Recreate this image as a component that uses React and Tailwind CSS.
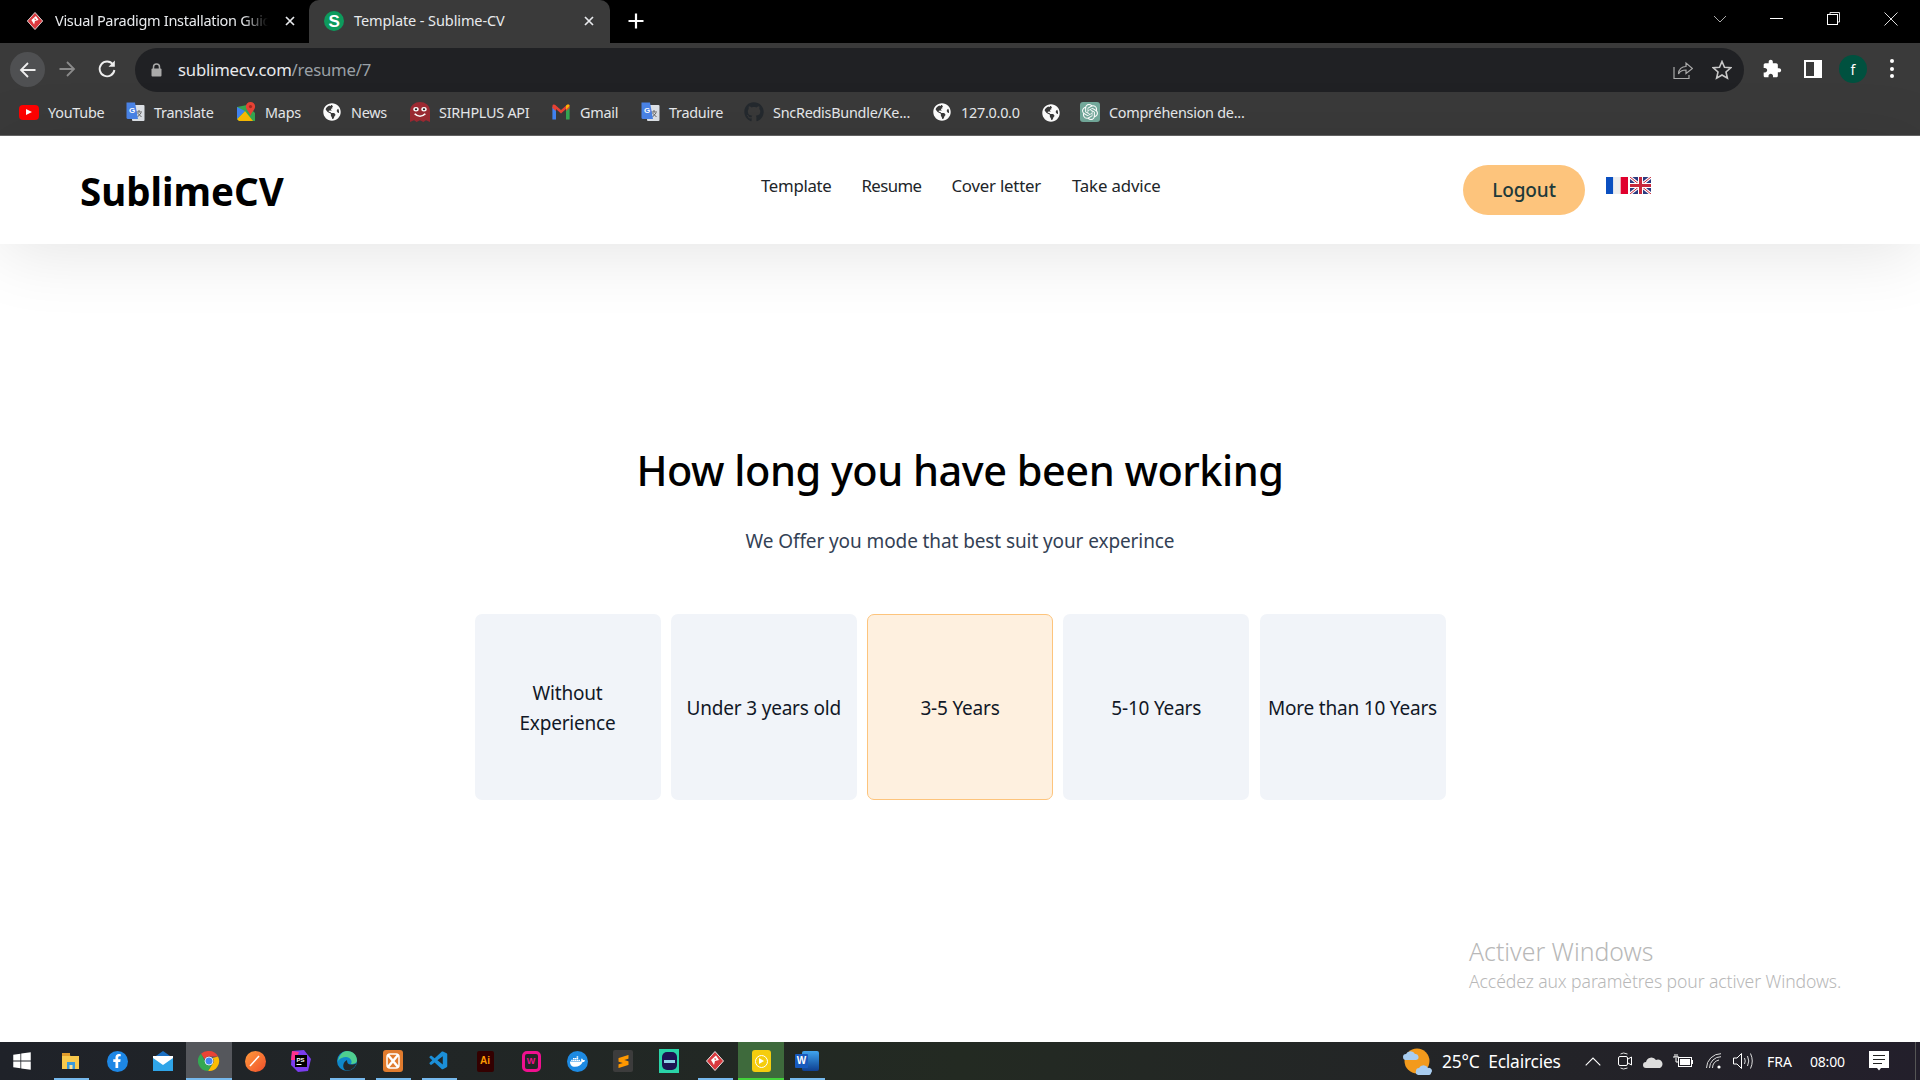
import React from "react";
import { FaGithub, FaGlobeAmericas, FaWindows, FaFacebookF, FaDocker } from "react-icons/fa";
import { SiOpenai, SiSublimetext } from "react-icons/si";
import { VscVscode } from "react-icons/vsc";

const font = "font-['Noto_Sans','Open_Sans',sans-serif]";

const VP = ({ s = 18 }) => (
  <svg width={s} height={s} viewBox="0 0 20 20">
    <path d="M10 0.5 L18.5 10 L10 19.5 L1.5 10 Z" fill="#d93a3f" stroke="#e9e9e9" strokeWidth="1" />
    <path d="M6 9 L11 4.5 L14 9 L10 10 L9 14 Z" fill="#fff" />
    <path d="M9.5 7 L11.5 8 L9.8 9.2 Z" fill="#d93a3f" />
  </svg>
);

const TabS = () => (
  <div className="w-5 h-5 rounded-full bg-[#0d9a5c] text-white flex items-center justify-center text-[17px] font-bold leading-none font-['Liberation_Sans',sans-serif]">S</div>
);

const Translate = () => (
  <svg width="20" height="20" viewBox="0 0 20 20">
    <rect x="7" y="3" width="12.5" height="16" rx="1" fill="#dfe3e8" />
    <path d="M11 10h6M14 8v2M12.5 15l3.5-4M12.5 11l4 4" stroke="#666" strokeWidth="1" fill="none" />
    <path d="M1.5 0.5H10L13 17H3a1.5 1.5 0 0 1-1.5-1.5Z" fill="#4a84e8" />
    <text x="4" y="11" fontSize="8" fontWeight="700" fill="#fff" fontFamily="Liberation Sans">G</text>
  </svg>
);

const Maps = () => (
  <svg width="20" height="20" viewBox="0 0 20 20">
    <path d="M1 5 L11 3 L19 11 V19 H3 L1 17 Z" fill="#36a852" />
    <path d="M1 17 L9 9 L17 19 H3 Z" fill="#fbbc04" />
    <path d="M1 5 L9 9 L1 17 Z" fill="#4285f4" />
    <path d="M14.5 0 a4.6 4.6 0 0 1 4.6 4.6 C19.1 8 15.5 10 14.5 14 C13.5 10 9.9 8 9.9 4.6 A4.6 4.6 0 0 1 14.5 0Z" fill="#ea4335" />
    <circle cx="14.5" cy="4.6" r="1.6" fill="#a52a20" />
  </svg>
);

const Ghost = () => (
  <svg width="20" height="20" viewBox="2.5 1 15 18" preserveAspectRatio="none">
    <path d="M2.5 19 V8.5 a7.5 7.5 0 0 1 15 0 V19 L14.5 17.5 L12.5 19 L10 17.5 L7.5 19 L5.5 17.5 Z" fill="#9d2a33" />
    <circle cx="7" cy="7.5" r="2" fill="#fff" /><circle cx="13" cy="7.5" r="2" fill="#fff" />
    <circle cx="7" cy="7.5" r="0.9" fill="#222" /><circle cx="13" cy="7.5" r="0.9" fill="#222" />
    <path d="M6 11.5 Q10 16 14 11.5" stroke="#fff" strokeWidth="1.3" fill="none" />
  </svg>
);

const Gmail = () => (
  <svg width="20" height="16" viewBox="0 0 20 16">
    <path d="M1.4 15.5 V3 L5 5.5 V15.5 Z" fill="#4285f4" />
    <path d="M15 15.5 V5.5 L18.6 3 V15.5 Z" fill="#34a853" />
    <path d="M1.4 4 V2 Q1.6 0 4 0.8 L10 6 L16 0.8 Q18.4 0 18.6 2 V4 L15 7 V5 L10 9.6 L5 5 V7 Z" fill="#ea4335" />
    <path d="M15 5.5 L18.6 2 Q18.4 0 16 0.8 L15 1.8Z" fill="#fbbc04" />
  </svg>
);

const Gpt = () => (
  <div className="w-5 h-5 rounded-[3px] bg-[#74aa9c] flex items-center justify-center"><SiOpenai className="text-[16px] text-white" /></div>
);

const bookmarks = [
  { w: "w-[106px]", icon: <div className="w-5 h-[15px] bg-[#f00] rounded-[4px] flex items-center justify-center"><div className="w-0 h-0 border-y-[3.5px] border-y-transparent border-l-[6px] border-l-white" /></div>, t: "YouTube" },
  { w: "w-[111px]", icon: <Translate />, t: "Translate" },
  { w: "w-[86px]", icon: <Maps />, t: "Maps" },
  { w: "w-[88px]", icon: <FaGlobeAmericas className="text-[18px] text-white" />, t: "News" },
  { w: "w-[141px]", icon: <Ghost />, t: "SIRHPLUS API" },
  { w: "w-[89px]", icon: <Gmail />, t: "Gmail" },
  { w: "w-[104px]", icon: <Translate />, t: "Traduire" },
  { w: "w-[188px]", icon: <FaGithub className="text-[20px] text-[#24292e]" />, t: "SncRedisBundle/Ke..." },
  { w: "w-[109px]", icon: <FaGlobeAmericas className="text-[18px] text-white" />, t: "127.0.0.0" },
  { w: "w-[39px]", icon: <FaGlobeAmericas className="text-[18px] text-white" />, t: "" },
  { w: "w-[190px]", icon: <Gpt />, t: "Compréhension de..." },
];

const TabStrip = () => (
  <div className="h-[43px] bg-black flex items-end pl-[8px] text-white text-[14.5px] tracking-[-0.1px] shrink-0">
    <div className="w-[301px] h-[43px] flex items-center pl-[18px] pr-[13px] pb-[1px] gap-[11px]">
      <VP />
      <span className="w-[213px] overflow-hidden whitespace-nowrap tracking-[-0.3px] text-[#e8eaed] [mask-image:linear-gradient(90deg,#000_88%,transparent)]">Visual Paradigm Installation Guide</span>
      <svg width="12" height="12" viewBox="0 0 12 12" className="ml-auto shrink-0"><path d="M2 2 L10 10 M10 2 L2 10" stroke="#e8eaed" strokeWidth="1.7" /></svg>
    </div>
    <div className="w-[301px] h-[43px] bg-[#3a3a3a] rounded-t-[10px] flex items-center pl-[15px] pr-[15px] pb-[1px] gap-[10px]">
      <TabS />
      <span className="whitespace-nowrap text-[#e8eaed]">Template - Sublime-CV</span>
      <svg width="12" height="12" viewBox="0 0 12 12" className="ml-auto"><path d="M2 2 L10 10 M10 2 L2 10" stroke="#e8eaed" strokeWidth="1.7" /></svg>
    </div>
    <div className="h-[43px] flex items-center ml-[18px] pb-[1px]">
      <svg width="16" height="16" viewBox="0 0 16 16"><path d="M8 0.5 V15.5 M0.5 8 H15.5" stroke="#fff" strokeWidth="2.2" /></svg>
    </div>
    <div className="ml-auto h-[43px] flex items-center self-start pb-[6px]">
      <svg width="14" height="8" viewBox="0 0 14 8" className="mr-[43px]"><path d="M1 1 L7 7 L13 1" stroke="#aaa" fill="none" /></svg>
      <div className="w-[13px] h-px bg-white mr-[44px]" />
      <svg width="13" height="13" viewBox="0 0 13 13" className="mr-[44px]"><path d="M3 2.5 V0.5 H12.5 V10 H10.5" stroke="#ddd" fill="none" /><rect x="0.5" y="2.5" width="10" height="10" stroke="#fff" fill="none" /></svg>
      <svg width="14" height="14" viewBox="0 0 14 14" className="mr-[22px]"><path d="M0.5 0.5 L13.5 13.5 M13.5 0.5 L0.5 13.5" stroke="#ddd" /></svg>
    </div>
  </div>
);

const Toolbar = () => (
  <div className="h-[53px] bg-[#3a3a3a] flex items-start pt-[5px] shrink-0">
    <div className="w-[35px] h-[35px] ml-[10px] mt-[4px] rounded-full bg-[#4f5052] flex items-center justify-center">
      <svg width="18" height="18" viewBox="0 0 18 18"><path d="M16.5 9 H2 M9 2 L2 9 L9 16" stroke="#eee" strokeWidth="1.8" fill="none" /></svg>
    </div>
    <div className="w-[18px] h-[18px] ml-[13px] mt-[12px]">
      <svg width="18" height="18" viewBox="0 0 18 18"><path d="M1.5 9 H16 M9 2 L16 9 L9 16" stroke="#8a8a8a" strokeWidth="1.8" fill="none" /></svg>
    </div>
    <div className="w-[20px] h-[20px] ml-[21px] mt-[11px]">
      <svg width="20" height="20" viewBox="0 0 20 20"><path d="M16 5.5 A7.4 7.4 0 1 0 17.4 11" stroke="#eee" strokeWidth="1.9" fill="none" /><path d="M17.8 1.5 V7.8 H11.5 Z" fill="#eee" /></svg>
    </div>
    <div className="w-[1609px] h-[44px] ml-[18px] rounded-full bg-[#202124] flex items-center pl-[16px] pr-[12px]">
      <svg width="11" height="14" viewBox="0 0 11 14"><path d="M2.5 6 V4 a3 3 0 0 1 6 0 V6" stroke="#aaa" strokeWidth="1.5" fill="none" /><rect x="0.5" y="5.5" width="10" height="8" rx="1" fill="#aaa" /></svg>
      <span className="ml-[16px] text-[16.7px] tracking-[-0.2px] text-[#e8eaed]">sublimecv.com<span className="text-[#9aa0a6]">/resume/7</span></span>
      <svg width="20" height="20" viewBox="0 0 20 20" className="ml-auto"><path d="M1 7 V18.5 H16 V15" stroke="#aaa" strokeWidth="1.2" fill="none" /><path d="M5.5 14 C5.5 9 9 6.5 13 6.5 V3 L19.5 8.5 L13 13.5 V10 C9.5 10 7 11 5.5 14 Z" stroke="#aaa" strokeWidth="1.2" fill="none" /></svg>
      <svg width="20" height="20" viewBox="0 0 20 20" className="ml-[19px]"><path d="M10 1.5 L12.5 7.3 L18.7 7.8 L14 12 L15.4 18.2 L10 15 L4.6 18.2 L6 12 L1.3 7.8 L7.5 7.3 Z" stroke="#c8c8c8" strokeWidth="1.6" fill="none" /></svg>
    </div>
    <svg width="20" height="20" viewBox="0 0 24 24" className="ml-[18px] mt-[11px] shrink-0"><path fill="#fff" d="M20.5 11H19V7c0-1.1-.9-2-2-2h-4V3.5C13 2.12 11.88 1 10.5 1S8 2.12 8 3.5V5H4c-1.1 0-1.99.9-1.99 2v3.8H3.5c1.49 0 2.7 1.21 2.7 2.7s-1.21 2.7-2.7 2.7H2V20c0 1.1.9 2 2 2h3.8v-1.5c0-1.49 1.21-2.7 2.7-2.7 1.49 0 2.7 1.21 2.7 2.7V22H17c1.1 0 2-.9 2-2v-4h1.5c1.38 0 2.5-1.12 2.5-2.5S21.88 11 20.5 11z" /></svg>
    <div className="w-[18px] h-[18px] ml-[22px] mt-[12px] border-[2.5px] border-white border-r-[8px] bg-[#3a3a3a]" />
    <div className="w-[28px] h-[28px] ml-[17px] mt-[7px] rounded-full bg-[#00513f] text-white text-[14px] flex items-center justify-center">f</div>
    <div className="ml-[23px] mt-[11px] flex flex-col gap-[3.5px]">
      <div className="w-[4px] h-[4px] rounded-full bg-white" /><div className="w-[4px] h-[4px] rounded-full bg-white" /><div className="w-[4px] h-[4px] rounded-full bg-white" />
    </div>
  </div>
);

const Bookmarks = () => (
  <div className="h-[40px] bg-[#3a3a3a] border-b border-b-[#666] flex items-center pl-[19px] text-[14.4px] tracking-[-0.25px] text-[#e8eaed] shrink-0 pb-[6px]">
    {bookmarks.map((b, i) => (
      <div key={i} className={`${b.w} flex items-center gap-[9px] whitespace-nowrap shrink-0`}>
        <div className="w-5 h-5 flex items-center justify-center shrink-0">{b.icon}</div>
        {b.t && <span>{b.t}</span>}
      </div>
    ))}
  </div>
);

const Flags = () => (
  <div className="flex gap-[2px] mt-[41px] ml-[21px]">
    <svg width="22" height="17" viewBox="0 0 22 17"><rect width="7.3" height="17" fill="#0a4fc0" /><rect x="7.3" width="7.4" height="17" fill="#eeeeee" /><rect x="14.7" width="7.3" height="17" fill="#e0002d" /></svg>
    <svg width="21" height="17" viewBox="0 0 21 17"><rect width="21" height="17" fill="#2b3a80" /><path d="M0 0 L21 17 M21 0 L0 17" stroke="#fff" strokeWidth="3" /><path d="M0 0 L21 17 M21 0 L0 17" stroke="#c8283c" strokeWidth="1" /><path d="M10.5 0 V17 M0 8.5 H21" stroke="#fff" strokeWidth="5" /><path d="M10.5 0 V17 M0 8.5 H21" stroke="#c8283c" strokeWidth="3" /></svg>
  </div>
);

const Header = () => (
  <header className="h-[108px] bg-white flex items-start pl-[80px] shrink-0 shadow-[0_8px_70px_rgba(0,0,0,0.11)] relative z-10">
    <div className="w-[681px] mt-[29px] text-[38.5px] leading-[52px] font-bold text-black">SublimeCV</div>
    <nav className="w-[702px] mt-[37px] flex gap-[30px] text-[16.8px] leading-[26px] text-[#212529] tracking-[-0.3px]">
      <a>Template</a><a className="tracking-[-0.6px]">Resume</a><a className="tracking-[-0.2px]">Cover letter</a><a className="tracking-[-0.15px] ml-[1px]">Take advice</a>
    </nav>
    <button className="w-[122px] h-[50px] mt-[29px] pt-[1px] rounded-full bg-[#fdc47c] text-[#1e3a3a] text-[19px] font-medium tracking-[-0.1px] flex items-center justify-center">Logout</button>
    <Flags />
  </header>
);

const options = [<>Without<br />Experience</>, "Under 3 years old", "3-5 Years", "5-10 Years", "More than 10 Years"];

const Main = () => (
  <main className="flex-1 bg-white relative flex flex-col items-center overflow-hidden">
    <h1 className="mt-[196px] text-[41.5px] leading-[60px] font-[550] text-black tracking-[-0.5px]">How long you have been working</h1>
    <p className="mt-[27px] text-[19px] leading-[28px] text-[#334155] tracking-[-0.1px]">We Offer you mode that best suit your experince</p>
    <div className="mt-[59px] flex gap-[10.25px]">
      {options.map((o, i) => (
        <div key={i} className={`w-[186px] h-[186px] rounded-[7px] flex items-center justify-center text-center px-[6px] pt-[2px] text-[19px] leading-[30px] text-[#111827] tracking-[-0.2px] ${i === 2 ? "bg-[#fef0df] border border-[#fdc47c]" : "bg-[#f1f4f9]"}`}>{o}</div>
      ))}
    </div>
    <div className="absolute left-[1469px] top-[692px] text-[#b8b8b8] font-light">
      <div className="text-[24.8px] leading-[30px]">Activer Windows</div>
      <div className="text-[17.6px] leading-[26px] mt-[2px] tracking-[-0.1px]">Accédez aux paramètres pour activer Windows.</div>
    </div>
  </main>
);

const Chrome = () => (
  <svg width="22" height="22" viewBox="0 0 22 22">
    <path d="M11 1 A10 10 0 0 1 20 6.5 H11 A4.5 4.5 0 0 0 6.8 9.5 L3 3.8 A10 10 0 0 1 11 1Z" fill="#ea4335" />
    <path d="M20 6.5 A10 10 0 0 1 10 21 L14.6 13.8 A4.5 4.5 0 0 0 14.5 8 Z" fill="#fbbc04" />
    <path d="M3 3.8 L7.5 12 A4.5 4.5 0 0 0 14 14.5 L10 21 A10 10 0 0 1 3 3.8Z" fill="#34a853" />
    <circle cx="11" cy="11" r="4" fill="#4285f4" stroke="#fff" strokeWidth="0.8" />
  </svg>
);

const T = ({ c, children, cls = "" }) => (
  <div className={`w-[46px] h-[38px] shrink-0 relative flex items-center justify-center ${cls}`}>
    {children}
    {c && <div className={`absolute bottom-0 h-[2px] bg-[#76b9ed] ${c}`} />}
  </div>
);

const Taskbar = () => (
  <div className="h-[38px] bg-gradient-to-r from-[#1f2229] via-[#232a22] to-[#231f2b] flex items-center shrink-0 text-white">
    <div className="w-[48px] h-[38px] flex items-center justify-center shrink-0"><FaWindows className="text-[20px] text-white mr-[4px]" /></div>
    <T c="w-[35px]">
      <svg width="20" height="20" viewBox="0 0 20 20"><path d="M1 3 H8 L9.5 5 H18 V18 H1 Z" fill="#f8c94c" /><rect x="1" y="2" width="8" height="3" fill="#e09c2b" /><rect x="6" y="11" width="8" height="7" fill="#3a9ad9" /><rect x="8.5" y="14" width="3" height="4" fill="#f8e19a" /></svg>
    </T>
    <T><div className="w-[21px] h-[21px] rounded-full bg-[#1d87e5] flex items-center justify-center"><FaFacebookF className="text-[14px] text-white" /></div></T>
    <T>
      <svg width="20" height="20" viewBox="0 0 20 20"><path d="M0 7 L10 0 L20 7 V20 H0 Z" fill="#1a6fc2" /><path d="M0 7 H20 V20 H0 Z" fill="#2fa5e8" /><path d="M0 7 L10 14 L20 7 V5 H0 Z" fill="#fff" /></svg>
    </T>
    <T c="w-[46px]" cls="bg-[#55575c]"><Chrome /></T>
    <T><div className="w-[21px] h-[21px] rounded-full bg-gradient-to-br from-[#ff9a3c] to-[#ee4b2b] flex items-center justify-center"><svg width="14" height="14" viewBox="0 0 14 14"><path d="M2 12 L11 2" stroke="#fff" strokeWidth="1.5" /></svg></div></T>
    <T>
      <svg width="22" height="22" viewBox="0 0 22 22"><path d="M2 1 L14 0 L21 9 L18 21 L8 22 L1 15Z" fill="#7b3cf0" /><path d="M2 1 L9 2 L6 10 L1 10 Z" fill="#ff318c" /><rect x="5" y="5" width="12" height="12" fill="#000" /><text x="6.5" y="11.5" fontSize="6" fontWeight="700" fill="#fff" fontFamily="Liberation Sans">PS</text><rect x="6.5" y="14" width="5" height="1" fill="#fff" /></svg>
    </T>
    <T c="w-[35px]">
      <svg width="22" height="22" viewBox="0 0 22 22"><circle cx="11" cy="11" r="10" fill="#0f87c9" /><path d="M11 1 C17 1 21 5 21 10.5 C21 13 18 14 15 14 C17 11 14 7 10 7 C7 7 4 8 2 11 C3 5 7 1 11 1Z" fill="#4fcf8f" /><path d="M9 20 C6 17 7 12 11 10 C11 13 12 14.5 15 14.5 C17 14.5 19.5 14 20.5 13 C19 18 14 22 9 20Z" fill="#23282b" /></svg>
    </T>
    <T c="w-[35px]"><div className="w-[20px] h-[22px] rounded-[3px] bg-[#e07b2e] flex items-center justify-center"><svg width="14" height="16" viewBox="0 0 14 16"><path d="M2 2 L12 14 M12 2 L2 14" stroke="#fff" strokeWidth="2.5" /><rect x="1" y="1" width="12" height="14" rx="3" stroke="#fff" strokeWidth="1.5" fill="none" /></svg></div></T>
    <T c="w-[35px]"><VscVscode className="text-[22px] text-[#1b8fd8]" /></T>
    <T><div className="w-[17px] h-[21px] rounded-[2px] bg-[#330000] text-[#ff9a00] text-[10px] font-bold leading-none flex items-center justify-center font-['Liberation_Sans',sans-serif]">Ai</div></T>
    <T><div className="w-[19px] h-[21px] rounded-[5px] border-[3px] border-[#f0108f] text-[#f0108f] text-[9px] font-bold leading-none flex items-center justify-center font-['Liberation_Sans',sans-serif]">W</div></T>
    <T><div className="w-[21px] h-[21px] rounded-full bg-[#1d8ae2] flex items-center justify-center"><FaDocker className="text-[15px] text-white" /></div></T>
    <T><div className="w-[20px] h-[22px] rounded-[2px] bg-[#3c3c3c] flex items-center justify-center"><SiSublimetext className="text-[13px] text-[#ff9800]" /></div></T>
    <T>
      <div className="w-[20px] h-[24px] bg-[#2ad4a8] flex items-center justify-center"><div className="w-[15px] h-[18px] rounded-[5px] bg-[#1c1452] flex items-center justify-center"><div className="w-[11px] h-[3px] bg-[#8fd4e8]" /></div></div>
    </T>
    <T c="w-[35px]"><VP s={20} /></T>
    <T c="w-[46px] !bg-[#43d43a]" cls="bg-[#3e6a3c]">
      <div className="w-[19px] h-[22px] rounded-[3px] bg-[#f5cd0e] flex items-center justify-center"><div className="w-[13px] h-[13px] rounded-full border border-white flex items-center justify-center"><div className="w-0 h-0 border-y-[3.5px] border-y-transparent border-l-[5px] border-l-white" /></div></div>
    </T>
    <T c="w-[35px]">
      <div className="relative w-[24px] h-[20px]"><div className="absolute right-0 top-0 w-[17px] h-[20px] rounded-[2px] bg-gradient-to-b from-[#41a5ee] to-[#103f91]" /><div className="absolute left-0 top-[3px] w-[13px] h-[14px] rounded-[1px] bg-[#185abd] text-white text-[10px] font-bold leading-[14px] text-center font-['Liberation_Sans',sans-serif]">W</div></div>
    </T>

    <svg width="31" height="30" viewBox="0 0 31 30" className="ml-[571px] shrink-0">
      <circle cx="16" cy="15" r="12.5" fill="#f39a1c" />
      <path d="M2 11 a3 3 0 0 1 3 -3 a5 5 0 0 1 9 0 a3 3 0 0 1 1 6 H4 a3 3 0 0 1 -2 -3Z" fill="#a9cdf0" />
      <path d="M15 25 a3 3 0 0 1 3 -3 a5 5 0 0 1 9 0 a3 3 0 0 1 3 5 q0 2 -3 2 H17 a3 3 0 0 1 -2 -4Z" fill="#a9cdf0" />
    </svg>
    <span className="ml-[10px] text-[17.4px] whitespace-nowrap w-[120px] tracking-[-0.2px] shrink-0">25°C&nbsp; Eclaircies</span>
    <svg width="16" height="9" viewBox="0 0 16 9" className="ml-[23px] shrink-0"><path d="M0.7 8.3 L8 1 L15.3 8.3" stroke="#fff" fill="none" strokeWidth="1.1" /></svg>
    <svg width="14" height="20" viewBox="0 0 14 20" className="ml-[17px] shrink-0"><path d="M2.5 3 Q5 1 9.5 3 M2.5 17 Q5 19 9.5 17" stroke="#ddd" fill="none" /><rect x="0.5" y="5.5" width="9" height="9" rx="1.5" stroke="#fff" fill="none" /><path d="M10 8 L13.5 6 V14 L10 12" stroke="#fff" fill="none" /></svg>
    <svg width="20" height="13" viewBox="0 0 20 13" className="ml-[11px] shrink-0"><path d="M3 13 a3 3 0 0 1 0 -6 a5.5 5.5 0 0 1 10 -2 a4 4 0 0 1 4 8 Z" fill="#ddd" /></svg>
    <svg width="20" height="14" viewBox="0 0 20 14" className="ml-[10px] shrink-0"><rect x="5.5" y="3.5" width="13" height="9" stroke="#fff" fill="none" /><rect x="7" y="5" width="10" height="6" fill="#fff" /><rect x="18.5" y="6" width="1.5" height="4" fill="#fff" /><path d="M0 3 H6 M2 0 V3 M4 0 V3 M3 4 V8 H5" stroke="#fff" fill="none" /></svg>
    <svg width="16" height="16" viewBox="0 0 16 16" className="ml-[13px] shrink-0"><path d="M0.5 15 A14.5 14.5 0 0 1 15 0.7 M3.5 15 A11.5 11.5 0 0 1 15 3.7 M6.5 15 A8.5 8.5 0 0 1 13 7" stroke="#ddd" fill="none" /><circle cx="13" cy="14" r="1.6" fill="#fff" /></svg>
    <svg width="21" height="18" viewBox="0 0 21 18" className="ml-[11px] shrink-0"><path d="M0.5 6 H4 L8.5 1.5 V16.5 L4 12 H0.5 Z" stroke="#fff" fill="none" /><path d="M11.5 6 Q13 9 11.5 12 M14.5 4 Q17 9 14.5 14 M17.5 1.5 Q21 9 17.5 16.5" stroke="#ddd" fill="none" /></svg>
    <span className="ml-[13px] w-[43px] text-[14px] shrink-0">FRA</span>
    <span className="w-[36px] text-[14px] tracking-[-0.2px] shrink-0">08:00</span>
    <svg width="20" height="20" viewBox="0 0 20 20" className="ml-[23px] shrink-0"><path d="M0 0 H20 V17 H12 L10 19.5 L8 17 H0 Z" fill="#fff" /><path d="M4 4.5 H16 M4 8.5 H16 M4 12.5 H13" stroke="#222" /></svg>
    <div className="ml-[26px] w-px h-[38px] bg-[#555] shrink-0" />
  </div>
);

export default function App() {
  return (
    <div className={`w-[1920px] h-[1080px] flex flex-col overflow-hidden ${font}`}>
      <TabStrip />
      <Toolbar />
      <Bookmarks />
      <Header />
      <Main />
      <Taskbar />
    </div>
  );
}
